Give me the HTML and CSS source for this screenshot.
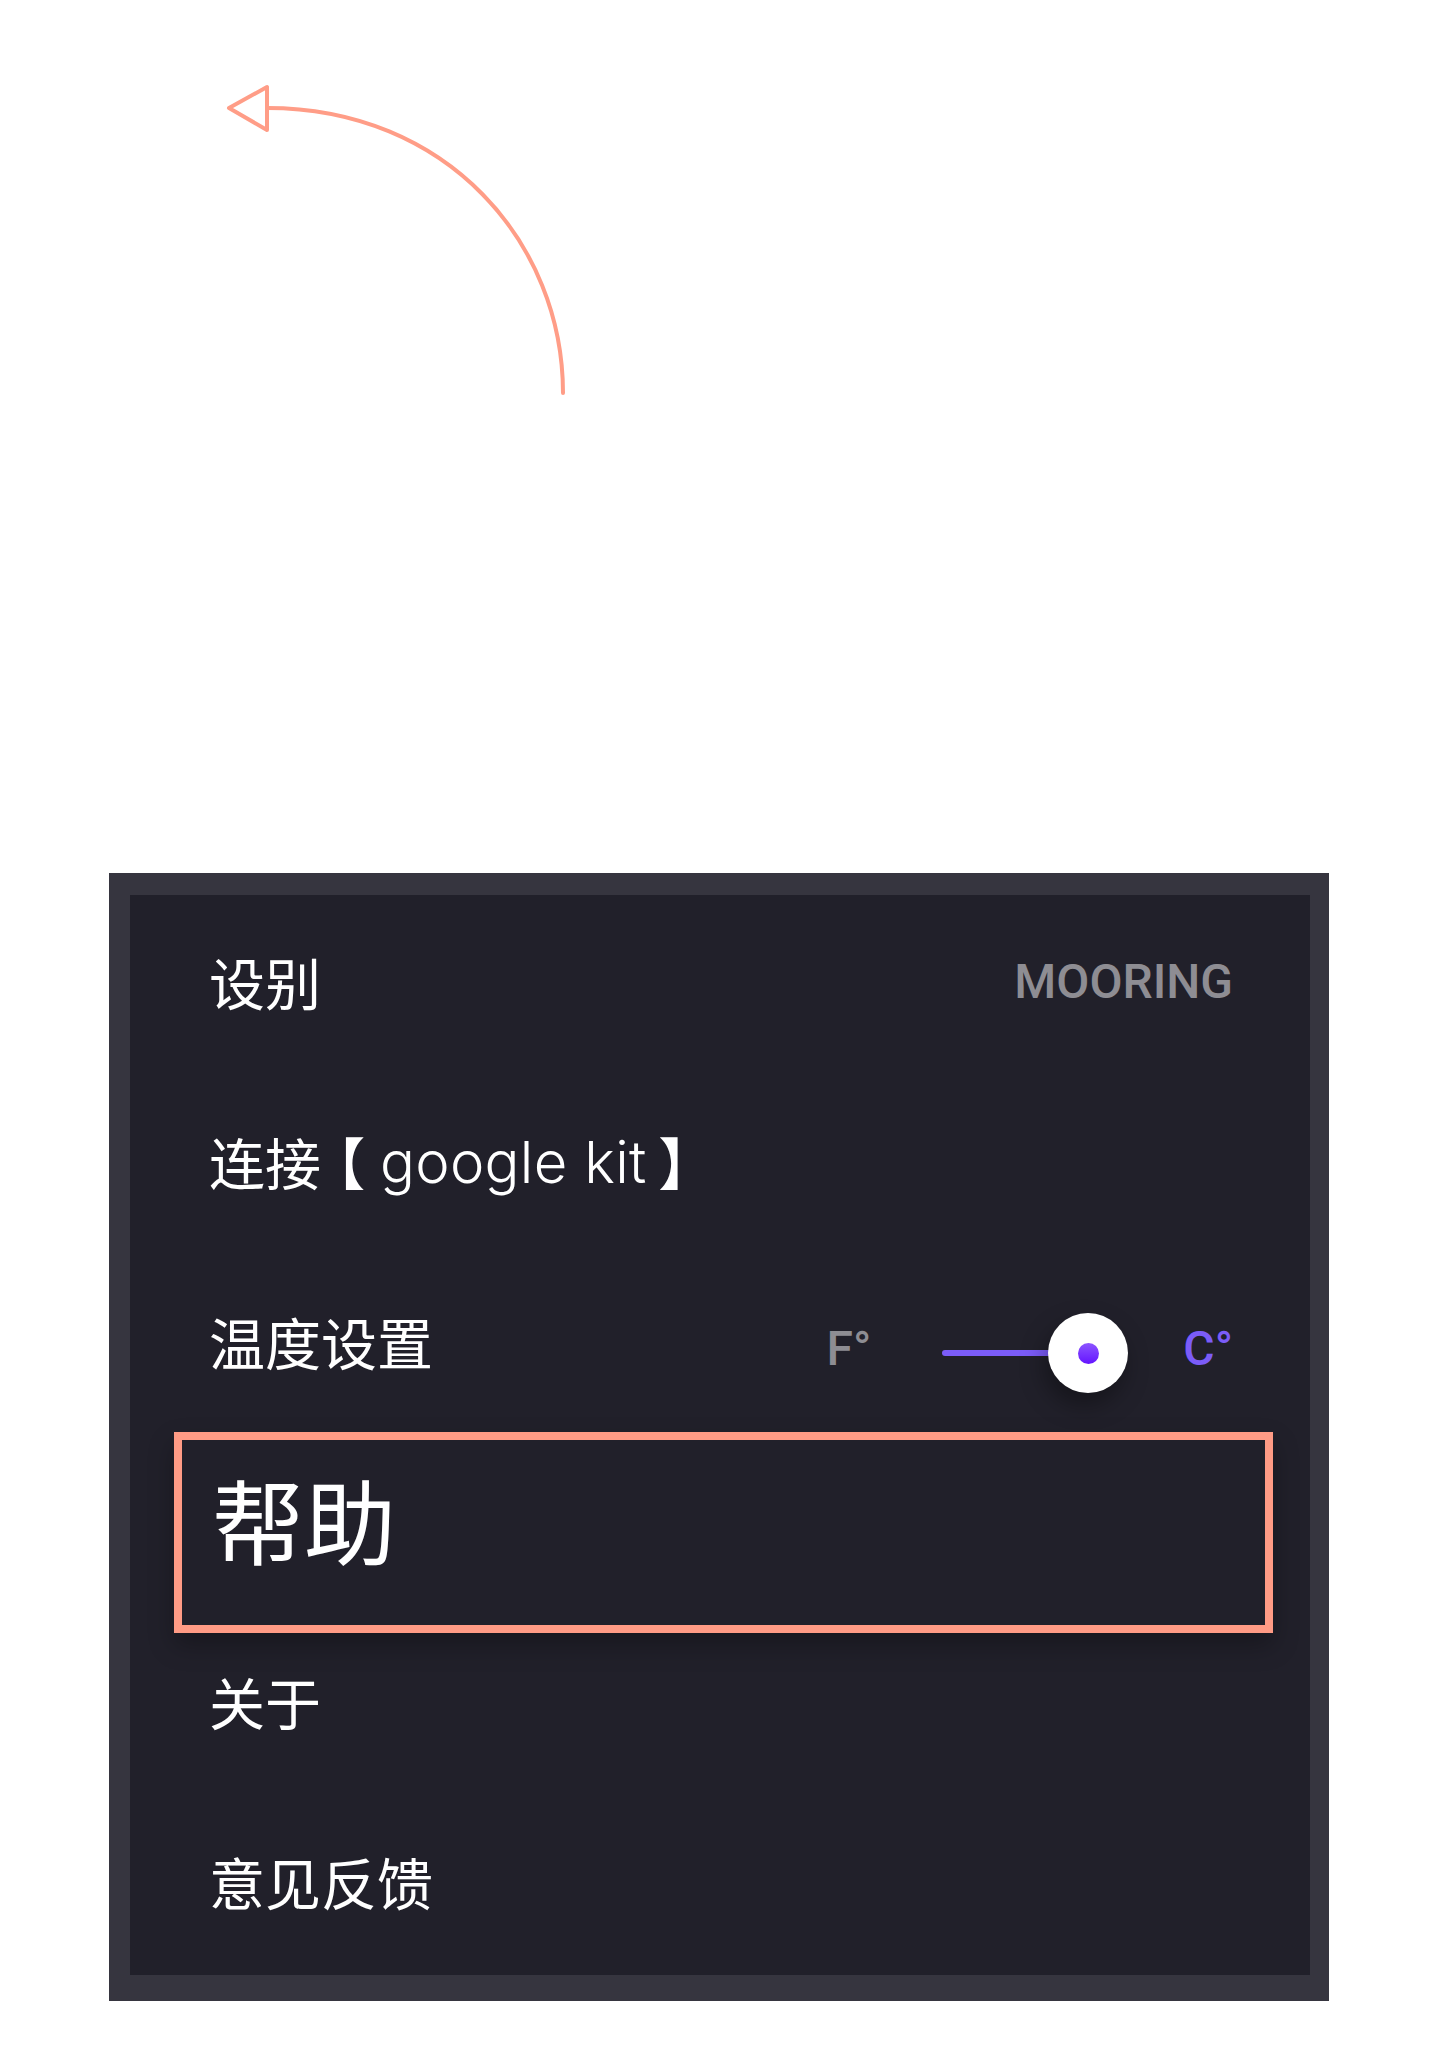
FILE: index.html
```html
<!DOCTYPE html>
<html lang="zh-CN">
<head>
<meta charset="utf-8">
<title>设置菜单</title>
<link rel="stylesheet" href="styles.css">
</head>
<body>
<div class="stage">
  <svg class="arrow" width="1440" height="873" viewBox="0 0 1440 873" aria-hidden="true">
    <path d="M267 108 C447 108 563 243 563 393" fill="none" stroke="#ff9d87" stroke-width="4" stroke-linecap="round"/>
    <path d="M229 108 L267 87 L267 130 Z" fill="#fff" stroke="#ff9d87" stroke-width="4" stroke-linejoin="round"/>
  </svg>
</div>
<div class="panel">
  <div class="menu">
    <div class="row">
      <span class="label">设别</span>
      <span class="meta">MOORING</span>
    </div>
    <div class="row">
      <span class="label">连接<span class="br br-open">【</span><span class="latin">google kit</span><span class="br br-close">】</span></span>
    </div>
    <div class="row">
      <span class="label">温度设置</span>
      <div class="unit-toggle">
        <span class="unit">F°</span>
        <div class="slider">
          <div class="track"></div>
          <div class="knob"><div class="dot"></div></div>
        </div>
        <span class="unit unit-on">C°</span>
      </div>
    </div>
    <div class="row row-focus">
      <span class="label label-big">帮助</span>
    </div>
    <div class="row">
      <span class="label">关于</span>
    </div>
    <div class="row">
      <span class="label">意见反馈</span>
    </div>
  </div>
</div>
</body>
</html>
```

FILE: styles.css
```css
html, body {
  margin: 0;
  padding: 0;
  background: #ffffff;
}

body {
  width: 1440px;
  font-family: "Noto Sans CJK SC", sans-serif;
}

.stage {
  height: 873px;
}

.arrow {
  display: block;
}

.panel {
  margin-left: 109px;
  width: 1220px;
  box-sizing: border-box;
  background: #36353f;
  padding: 22px 19px 26px 21px;
}

.menu {
  background: #21202a;
  display: flex;
  flex-direction: column;
}

.row {
  height: 180px;
  box-sizing: border-box;
  display: flex;
  align-items: center;
  justify-content: space-between;
  padding: 0 77px 0 79px;
}

.label {
  color: #ffffff;
  font-family: "Noto Sans CJK SC", sans-serif;
  font-size: 56px;
  line-height: 1;
  display: flex;
  align-items: center;
  white-space: pre;
  margin-bottom: 8px;
}

.br {
  font-weight: 700;
  font-feature-settings: "halt" 1;
}

.br-open {
  margin-left: 16px;
  margin-right: 15px;
}

.br-close {
  margin-left: 12px;
}

.latin {
  font-family: Inter, "Liberation Sans", sans-serif;
  font-weight: 300;
  font-size: 58px;
  letter-spacing: 0.3px;
  position: relative;
  top: 1px;
}

.meta {
  font-family: Roboto, sans-serif;
  font-weight: 500;
  font-size: 48px;
  color: #8e8d93;
  margin-bottom: 8px;
}

.unit-toggle {
  display: flex;
  align-items: center;
  margin-top: 7px;
}

.unit {
  font-family: Roboto, sans-serif;
  font-weight: 500;
  font-size: 48px;
  color: #8e8d93;
}

.unit-on {
  color: #7b5cf8;
  margin-left: 55px;
}

.slider {
  position: relative;
  width: 186px;
  height: 80px;
  margin-left: 71px;
  margin-top: 9px;
}

.track {
  position: absolute;
  left: 0;
  top: 37px;
  width: 120px;
  height: 6px;
  border-radius: 3px;
  background: #7b5cf8;
}

.knob {
  position: absolute;
  right: 0;
  top: 0;
  width: 80px;
  height: 80px;
  border-radius: 50%;
  background: #ffffff;
  box-shadow: -4px 12px 24px rgba(0, 0, 0, 0.35);
  display: flex;
  align-items: center;
  justify-content: center;
}

.dot {
  width: 21px;
  height: 21px;
  border-radius: 50%;
  background: linear-gradient(180deg, #8c55ff 0%, #6414ff 100%);
}

.row-focus {
  height: 201px;
  margin: -3px 37px -18px 44px;
  border: 8px solid #ff9b85;
  padding: 0 0 30px 30px;
  box-shadow: 0 12px 24px rgba(0, 0, 0, 0.28);
  background: #21202a;
  position: relative;
  z-index: 1;
}

.label-big {
  font-size: 92px;
  margin-bottom: 0;
}
```
